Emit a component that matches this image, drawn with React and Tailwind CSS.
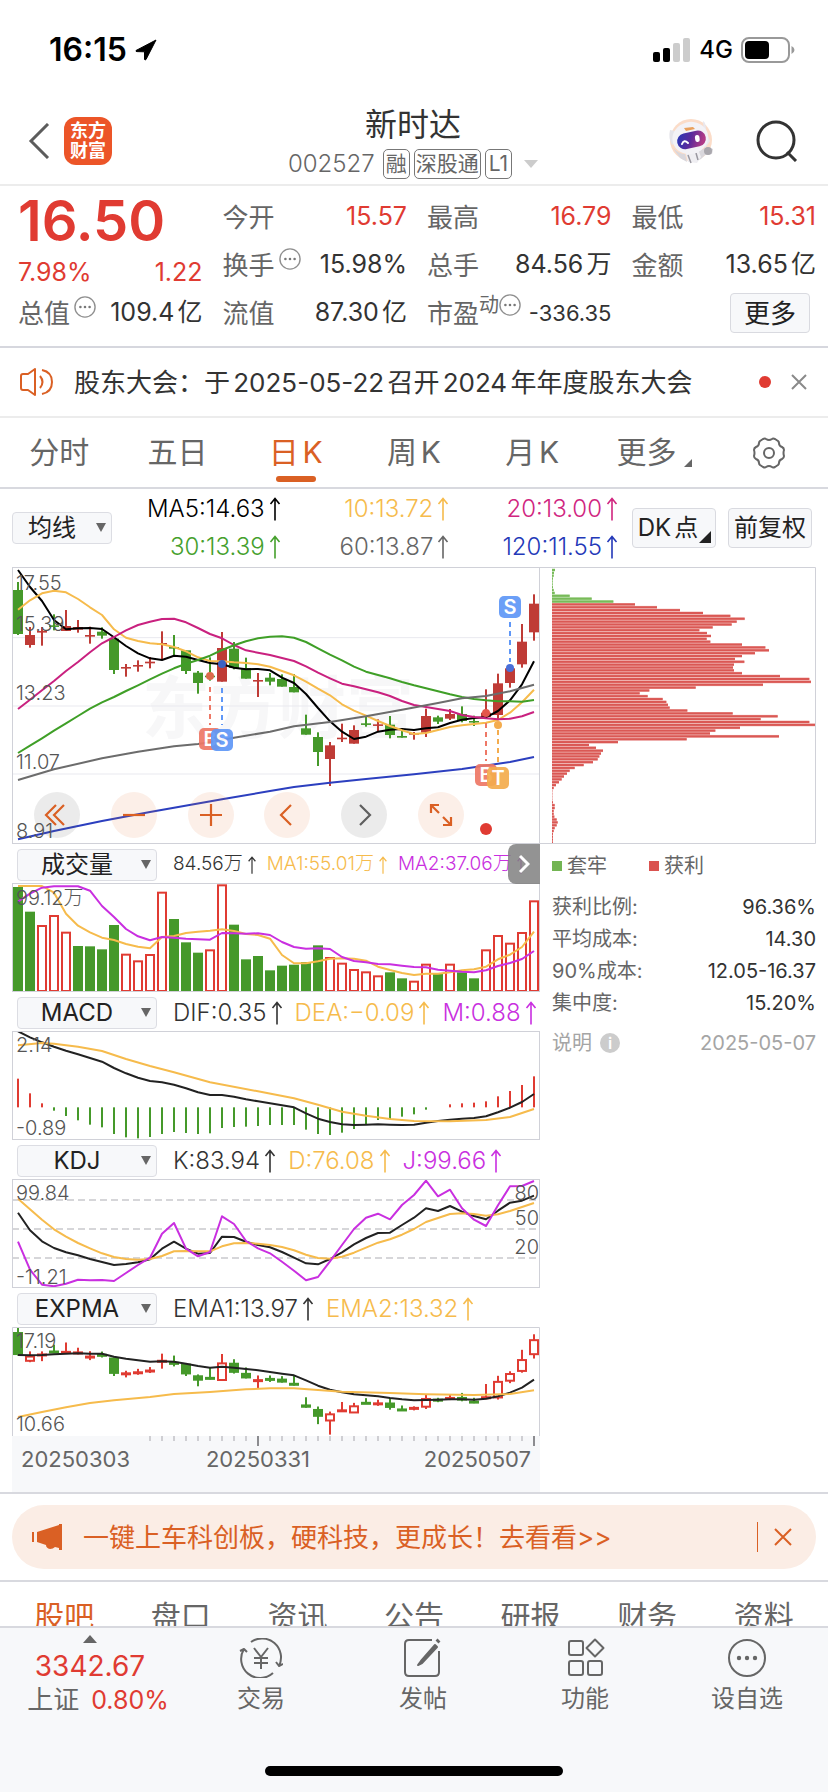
import React from "react";

const STEP = 12;
const px = (i) => 6 + STEP * i;

// [up?, high, body top, body bottom, low] on a 3x vertical scale
const CANDLES = [
  [0, 63, 87, 219, 222], [1, 198, 222, 252, 260], [1, 198, 210, 214, 254], [0, 160, 193, 197, 208],
  [1, 147, 195, 210, 210], [1, 177, 198, 206, 215], [1, 197, 222, 227, 248], [0, 199, 212, 224, 233],
  [0, 233, 233, 327, 339], [1, 309, 318, 322, 347], [1, 298, 312, 316, 332], [1, 288, 302, 307, 322],
  [1, 211, 246, 250, 297], [0, 222, 258, 263, 284], [0, 268, 268, 330, 339], [0, 330, 335, 366, 398],
  [0, 289, 344, 348, 359], [1, 213, 261, 362, 362], [0, 243, 263, 321, 325], [0, 290, 321, 353, 353],
  [1, 336, 357, 361, 408], [0, 336, 350, 362, 373], [0, 340, 354, 377, 377], [0, 339, 378, 394, 394],
  [0, 461, 502, 521, 521], [0, 514, 528, 573, 615], [1, 543, 553, 594, 675], [1, 488, 530, 534, 543],
  [1, 493, 507, 548, 548], [0, 466, 487, 491, 497], [1, 475, 490, 494, 510], [0, 465, 491, 522, 532],
  [0, 508, 525, 530, 530], [1, 513, 516, 520, 536], [1, 443, 465, 515, 528], [0, 464, 469, 482, 489],
  [1, 444, 459, 473, 477], [0, 436, 459, 480, 484], [0, 464, 480, 484, 495], [1, 385, 455, 468, 468],
  [1, 338, 367, 462, 474], [1, 312, 322, 366, 380], [1, 189, 242, 310, 320], [1, 100, 128, 214, 239],
];

const MA5 = [27, 78, 120, 177, 205, 202, 201, 204, 229, 255, 277, 292, 297, 284, 287, 297, 306, 310, 320, 325, 324, 328, 350, 366, 399, 441, 481, 512, 534, 527, 512, 506, 504, 507, 502, 499, 486, 476, 471, 469, 450, 418, 370, 301];
const MA10 = [146, 118, 97, 89, 94, 114, 139, 162, 205, 230, 240, 247, 250, 258, 271, 289, 300, 301, 304, 306, 310, 317, 330, 343, 362, 383, 403, 430, 449, 464, 480, 495, 508, 519, 516, 507, 498, 493, 489, 485, 477, 455, 424, 386];
const MA20 = [444, 416, 388, 360, 330, 303, 274, 247, 228, 208, 192, 182, 174, 173, 184, 201, 219, 232, 252, 268, 275, 282, 291, 300, 316, 335, 352, 368, 376, 385, 394, 405, 420, 432, 438, 444, 450, 462, 468, 472, 475, 473, 466, 453];
const MA30 = [576, 554, 532, 509, 487, 465, 443, 424, 408, 390, 373, 355, 338, 322, 308, 297, 284, 267, 253, 241, 232, 227, 226, 230, 243, 262, 281, 298, 317, 332, 342, 352, 363, 373, 382, 391, 400, 408, 414, 418, 421, 421, 422, 417];
const MA60 = [[0, 657], [3, 625], [7, 592], [10, 572], [13, 556], [15, 549], [16, 544], [18, 530], [21, 512], [23, 496], [26, 483], [29, 466], [32, 446], [35, 426], [37, 412], [39, 405], [41, 391], [43, 371]];
const MA120 = [[0, 835], [3, 810], [7, 780], [11, 753], [17, 715], [21, 690], [23, 678], [26, 665], [29, 654], [33, 640], [37, 624], [41, 603], [43, 588]];

const VOLUME = [138, 212, 252, 222, 272, 315, 316, 325, 252, 338, 358, 339, 152, 234, 304, 335, 325, 130, 251, 355, 345, 388, 374, 371, 363, 313, 348, 365, 384, 391, 403, 394, 412, 419, 368, 398, 368, 394, 412, 325, 282, 305, 273, 178];
const VOLUME_UP = new Set([2, 3, 4, 9, 10, 11, 12, 16, 17, 26, 27, 28, 29, 30, 33, 34, 36, 39, 40, 41, 42, 43]);
const VMA1 = [135, 135, 135, 155, 218, 254, 274, 290, 297, 309, 317, 322, 288, 285, 276, 272, 269, 265, 270, 279, 282, 293, 342, 367, 367, 361, 353, 352, 353, 359, 377, 387, 396, 402, 398, 398, 394, 388, 385, 377, 355, 341, 318, 272];
const VMA2 = [182, 158, 140, 136, 136, 136, 149, 195, 228, 264, 286, 298, 288, 290, 293, 295, 296, 276, 277, 278, 277, 282, 303, 318, 323, 322, 324, 348, 360, 364, 369, 370, 374, 378, 379, 386, 389, 392, 394, 388, 375, 366, 354, 330];

const MACD = [266, 310, 340, 362, 378, 391, 404, 412, 432, 442, 445, 441, 432, 426, 429, 432, 430, 414, 411, 410, 408, 405, 405, 405, 419, 432, 435, 428, 417, 404, 390, 388, 380, 373, 359, 352, 343, 340, 338, 334, 319, 303, 285, 259];
const DIF = [124, 142, 157, 170, 182, 193, 204, 215, 234, 250, 263, 273, 277, 284, 295, 307, 315, 315, 320, 328, 334, 340, 346, 352, 370, 386, 396, 403, 405, 404, 403, 404, 405, 404, 398, 393, 389, 386, 384, 379, 367, 353, 336, 312];
const DEA = [[0, 166], [2, 159], [3, 161], [5, 170], [7, 183], [9, 207], [11, 228], [13, 247], [16, 277], [20, 304], [23, 325], [25, 344], [27, 365], [29, 377], [31, 387], [33, 393], [36, 394], [39, 390], [41, 381], [43, 357]];

const KDJ_K = [215, 268, 301, 321, 334, 343, 354, 363, 372, 369, 364, 355, 323, 302, 323, 338, 336, 287, 288, 302, 312, 319, 333, 350, 367, 370, 354, 334, 310, 291, 276, 275, 252, 230, 202, 210, 195, 212, 225, 235, 209, 185, 179, 164];
const KDJ_D = [173, 205, 236, 265, 287, 306, 322, 337, 348, 354, 356, 354, 345, 331, 330, 331, 331, 316, 307, 306, 308, 312, 318, 328, 341, 351, 353, 347, 335, 320, 305, 295, 281, 264, 243, 231, 219, 217, 219, 224, 220, 210, 198, 186];
const KDJ_J = [302, 386, 431, 436, 428, 416, 418, 417, 420, 396, 372, 350, 278, 246, 323, 346, 333, 226, 249, 300, 322, 337, 362, 389, 418, 408, 361, 312, 264, 230, 218, 235, 192, 162, 119, 166, 146, 202, 236, 255, 193, 136, 135, 120];

const EMA1 = [195, 196, 195, 193, 191, 190, 191, 191, 200, 206, 211, 215, 214, 215, 221, 228, 233, 230, 233, 237, 241, 246, 251, 256, 271, 287, 299, 307, 313, 316, 319, 324, 328, 331, 330, 329, 328, 328, 329, 326, 319, 308, 293, 269];
const EMA2 = [[0, 381], [2, 366], [4, 352], [6, 339], [8, 331], [11, 321], [13, 312], [16, 306], [19, 298], [21, 295], [23, 295], [25, 300], [27, 305], [31, 309], [34, 313], [38, 315], [41, 312], [43, 301]];

const CHIPS = [
  9, 6, 5, 3, 2, 2, 3, 5, 8, 53, 119, 184, 249, 315, 384, 453, 535, 578, 554, 539, 482, 442, 465, 477, 464, 475, 570, 640, 651, 609, 570, 549, 577, 546, 543, 546, 570, 684, 772, 777, 633, 431, 292, 263, 287, 332, 343, 348, 353, 406, 542, 677, 626, 772, 790, 564, 490, 474, 681, 404, 198, 111, 132, 153, 147, 142, 137, 123, 95, 68, 53, 45, 36, 29, 21, 12, 5, 1, 1, 1, 1, 3, 8, 8, 5, 5, 7, 14, 17, 14, 8, 5, 3, 3, 3, 3,
];
const TRAPPED_ROWS = 12;

const GREEN = "#45992a";
const RED = "#e03b32";
const YELLOW = "#f6bb4c";
const PURPLE = "#c92fe0";

function Line({ data, offset, color, width = 2 }) {
  const points = data
    .map((d, i) => (Array.isArray(d) ? [px(d[0]), d[1]] : [px(i), d]))
    .map(([x, y]) => `${x},${(y / 3 - offset).toFixed(1)}`)
    .join(" ");
  return <polyline points={points} fill="none" stroke={color} strokeWidth={width} strokeLinejoin="round" />;
}

function Frame({ height, width = 528, open }) {
  return open ? (
    <path d={`M.5 ${height}V.5H${width - 0.5}V${height}`} fill="none" stroke="#d0d1d8" />
  ) : (
    <rect x="0.5" y="0.5" width={width - 1} height={height - 1} fill="none" stroke="#d0d1d8" />
  );
}

function Label({ x = 4, y, children, anchor = "start" }) {
  return (
    <text x={x} y={y} fontSize="20" fontWeight="300" fill="#555" textAnchor={anchor}>
      {children}
    </text>
  );
}

function Marker({ x, y, color, letter }) {
  return (
    <g opacity="0.92">
      <rect x={x - 11} y={y} width="22" height="22" rx="5" fill={color} />
      <text x={x} y={y + 18} fontSize="20" fontWeight="600" fill="#fff" textAnchor="middle">
        {letter}
      </text>
    </g>
  );
}

function Guide({ x, from, to, color }) {
  return <line x1={x} x2={x} y1={from} y2={to} stroke={color} strokeWidth="2" strokeDasharray="5 4" />;
}

function PriceChart() {
  const y = (v) => v / 3 - 6;
  return (
    <svg viewBox="0 0 528 277" className="block w-full" role="img" aria-label="日K线">
      <text x="130" y="166" fontSize="68" fontWeight="700" fill="#f7f7f8">东方财富</text>
      {[230, 435, 639].map((g) => (
        <line key={g} x1="0" x2="528" y1={y(g)} y2={y(g)} stroke="#e9e9ef" />
      ))}
      {CANDLES.map(([up, hi, top, bottom, lo], i) => {
        const color = up ? "#bf3b36" : GREEN;
        return (
          <g key={i} fill={color}>
            <rect x={px(i) - 1} y={y(hi)} width="2" height={(lo - hi) / 3} />
            <rect x={px(i) - 5} y={y(top)} width="10" height={Math.max(1.6, (bottom - top) / 3)} />
          </g>
        );
      })}
      <Line data={MA5} offset={6} color="#000" />
      <Line data={MA10} offset={6} color={YELLOW} />
      <Line data={MA20} offset={6} color="#c9217f" />
      <Line data={MA30} offset={6} color="#3f9f27" />
      <Line data={MA60} offset={6} color="#6c6c6c" />
      <Line data={MA120} offset={6} color="#2c3fbf" />
      <Label y="23">17.55</Label>
      <Label y="64">15.39</Label>
      <Label y="133">13.23</Label>
      <Label y="202">11.07</Label>
      <Label y="271">8.91</Label>
      <Guide x={px(16)} from={120} to={158} color="#ee7866" />
      <Guide x={px(17)} from={121} to={158} color="#5f97f7" />
      <Guide x={px(39)} from={156} to={194} color="#ee7866" />
      <Guide x={px(40)} from={163} to={196} color="#f4ac4e" />
      <Guide x={px(41)} from={55} to={95} color="#5f97f7" />
      <circle cx={px(16)} cy="109" r="4" fill="#dd6b4c" />
      <circle cx={px(17)} cy="97" r="4" fill="#3a62c4" />
      <circle cx={px(39)} cy="146" r="4" fill="#e4564a" />
      <circle cx={px(40)} cy="158" r="4" fill="#f4ac4e" />
      <circle cx={px(41)} cy="101" r="4" fill="#4a6fd8" />
      <Marker x={px(16)} y={161} color="#ee7866" letter="B" />
      <Marker x={px(17)} y={162} color="#5f97f7" letter="S" />
      <Marker x={px(39)} y={197} color="#ee7866" letter="B" />
      <Marker x={px(40)} y={200} color="#f4ac4e" letter="T" />
      <Marker x={px(41)} y={29} color="#5f97f7" letter="S" />
      <circle cx={px(39)} cy="262" r="6" fill="#e03b32" />
      <Frame height={277} />
    </svg>
  );
}

function VolumeChart() {
  return (
    <svg viewBox="0 0 528 109" className="block w-full" role="img" aria-label="成交量">
      {VOLUME.map((v, i) => {
        const top = v / 3 - 42;
        return VOLUME_UP.has(i) ? (
          <rect key={i} x={px(i) - 4} y={top + 1} width="8" height={107 - top} fill="#fff" stroke={RED} strokeWidth="2" />
        ) : (
          <rect key={i} x={px(i) - 5} y={top} width="10" height={109 - top} fill={GREEN} />
        );
      })}
      <Line data={VMA1} offset={42} color={YELLOW} />
      <Line data={VMA2} offset={42} color={PURPLE} />
      <Label y="22">99.12万</Label>
      <Frame height={109} />
    </svg>
  );
}

function MacdChart() {
  return (
    <svg viewBox="0 0 528 109" className="block w-full" role="img" aria-label="MACD">
      {MACD.map((v, i) => (
        <rect key={i} x={px(i) - 1} y={Math.min(v, 352) / 3 - 41} width="2" height={Math.abs(v - 352) / 3} fill={v < 352 ? RED : GREEN} />
      ))}
      <Line data={DIF} offset={41} color="#222" />
      <Line data={DEA} offset={41} color={YELLOW} />
      <Label y="21">2.14</Label>
      <Label y="104">-0.89</Label>
      <Frame height={109} />
    </svg>
  );
}

function KdjChart() {
  return (
    <svg viewBox="0 0 528 109" className="block w-full" role="img" aria-label="KDJ">
      {[21, 50, 79].map((y) => (
        <line key={y} x1="0" x2="528" y1={y} y2={y} stroke="#d6d6d9" strokeWidth="2" strokeDasharray="7 4" />
      ))}
      <Line data={KDJ_K} offset={38} color="#222" />
      <Line data={KDJ_D} offset={38} color={YELLOW} />
      <Line data={KDJ_J} offset={38} color={PURPLE} />
      <Label y="21">99.84</Label>
      <Label y="105">-11.21</Label>
      <Label x={527} y="21" anchor="end">80</Label>
      <Label x={527} y="46" anchor="end">50</Label>
      <Label x={527} y="75" anchor="end">20</Label>
      <Frame height={109} />
    </svg>
  );
}

function ExpmaChart() {
  const y = (v) => (0.5235 * v + 80.5) / 3 - 37;
  return (
    <svg viewBox="0 0 528 109" className="block w-full" role="img" aria-label="EXPMA">
      {CANDLES.map(([up, hi, top, bottom, lo], i) => {
        const color = up ? RED : GREEN;
        const height = y(bottom) - y(top);
        return (
          <g key={i} fill={color}>
            <rect x={px(i) - 1} y={y(hi)} width="2" height={y(lo) - y(hi)} />
            {up && height > 4.5 ? (
              <rect x={px(i) - 4} y={y(top) + 1} width="8" height={height - 1} fill="#fff" stroke={color} strokeWidth="2" />
            ) : (
              <rect x={px(i) - 5} y={y(top)} width="10" height={Math.max(3, height)} />
            )}
          </g>
        );
      })}
      <Line data={EMA1} offset={37} color="#222" />
      <Line data={EMA2} offset={37} color={YELLOW} />
      <Label y="21">17.19</Label>
      <Label y="104">10.66</Label>
      <Frame height={109} open />
    </svg>
  );
}

function TimeAxis() {
  return (
    <svg viewBox="0 0 528 56" className="block w-full bg-[#f7f8fa]" role="img" aria-label="日期">
      {CANDLES.map((_, i) => {
        if (i < 11) return null;
        const major = i === 20 || i === 43;
        return <rect key={i} x={px(i) - 1} y="0" width="2" height={major ? 10 : 5} fill={major ? "#8c8c90" : "#cfcfd3"} />;
      })}
      <g fontSize="22" fill="#666">
        <text x="9" y="31">20250303</text>
        <text x={px(20)} y="31" textAnchor="middle">20250331</text>
        <text x="519" y="31" textAnchor="end">20250507</text>
      </g>
    </svg>
  );
}

function ChipChart() {
  return (
    <svg viewBox="0 0 276 277" className="block w-full" role="img" aria-label="筹码分布">
      {CHIPS.map((w, i) => {
        const trapped = i < TRAPPED_ROWS;
        const y = 2 + i * 2.868;
        return (
          <g key={i}>
            <rect x="12" y={y - 0.4} width={w / 3} height="2.8" fill={trapped ? "#b4dba2" : "#eda6a3"} />
            <rect x="12" y={y} width={w / 3} height="2" fill={trapped ? "#78ba59" : "#da5854"} />
          </g>
        );
      })}
      <path d="M0 .5H275.500V276.500H0" fill="none" stroke="#d0d1d8" />
    </svg>
  );
}

function UpArrow({ small }) {
  return (
    <svg viewBox="0 0 12 24" className={small ? "h-[18px] w-[10px] shrink-0" : "h-6 w-3 shrink-0"} fill="none" stroke="currentColor" strokeWidth="1.600" aria-hidden="true">
      <path d="M6 23.500V1.500M1.500 7L6 1.500L10.500 7" />
    </svg>
  );
}

function Reading({ color, small, children }) {
  return (
    <span className={`flex items-center gap-1 whitespace-nowrap font-light ${small ? "text-[19px]" : "text-[24px] leading-[32px]"} ${color}`}>
      {children}
      <UpArrow small={small} />
    </span>
  );
}

function Picker({ label, options, wide }) {
  return (
    <span className={`relative block shrink-0 ${wide ? "w-[140px]" : "w-[100px]"}`}>
      <select
        aria-label={label}
        className="block h-8 w-full appearance-none rounded-[4px] border border-[#dcdde3] bg-[#f7f8fa] pr-5 text-center text-[24px] leading-[28px] text-[#222] [text-align-last:center]"
      >
        {options.map((o) => (
          <option key={o}>{o}</option>
        ))}
      </select>
      <svg viewBox="0 0 10 9" className="pointer-events-none absolute right-[6px] top-[11px] h-[9px] w-[10px]" aria-hidden="true">
        <path d="M0 0H10L5 9Z" fill="#666" />
      </svg>
    </span>
  );
}

function IndicatorHeader({ name, children }) {
  return (
    <div className="flex h-[39px] items-center gap-4 pl-[5px] pt-[2px]">
      <Picker label={name} options={[name]} wide />
      {children}
    </div>
  );
}

function MoreDots() {
  return (
    <svg viewBox="0 0 24 24" className="h-[22px] w-[22px] shrink-0" aria-hidden="true">
      <circle cx="12" cy="12" r="11" fill="none" stroke="#8f8f8f" strokeWidth="1.500" />
      <circle cx="7" cy="12" r="1.400" fill="#777" />
      <circle cx="12" cy="12" r="1.400" fill="#777" />
      <circle cx="17" cy="12" r="1.400" fill="#777" />
    </svg>
  );
}

function Stat({ label, info, red, children }) {
  return (
    <div className="flex h-12 items-center justify-between whitespace-nowrap">
      <dt className="flex items-center text-[26px] text-[#666]">
        {label}
        {info && (
          <span className="-mt-3 ml-1">
            <MoreDots />
          </span>
        )}
      </dt>
      <dd className={`text-[25px] [text-autospace:normal] ${red ? "text-[#e03b32]" : "text-[#333]"}`}>{children}</dd>
    </div>
  );
}

function Robot() {
  return (
    <svg viewBox="0 0 46 46" className="h-[46px] w-[46px]" aria-hidden="true">
      <defs>
        <linearGradient id="visor" x1="0" y1="0" x2="1" y2="0.300">
          <stop offset="0" stopColor="#2438b8" />
          <stop offset="0.550" stopColor="#5a2a9c" />
          <stop offset="1" stopColor="#b03a86" />
        </linearGradient>
      </defs>
      <circle cx="23" cy="22" r="21" fill="#fbdcc8" />
      <path d="M5 30q6 6 12 6l2 8-7-4zM33 32l7-3 5 2-1 5-7 1-4 4-6 3-5-1-4-9z" fill="#d9d7dc" />
      <circle cx="40" cy="33" r="4" fill="#a9a7ad" />
      <path d="M17 33l13-2 3 8-4 6-9-1z" fill="#efeef2" />
      <path d="M20 37l3 8M28 35l2 7" stroke="#9a98a0" strokeWidth="1.500" fill="none" />
      <path d="M2 12q-2 8 2 15l3-2V13z" fill="#e5e4ea" />
      <path d="M35 3q3 1 3 10l4 10-5 7z" fill="#e9e8ee" />
      <ellipse cx="22" cy="20" rx="18" ry="16" fill="#f3f2f6" transform="rotate(-14 22 19)" />
      <path d="M16 10l9-1 2 2-9 2z" fill="#e9a05c" />
      <rect x="9" y="14" width="29" height="16" rx="8" fill="url(#visor)" transform="rotate(-12 23 22)" />
      <path d="M14 26q2-5 6-1" fill="none" stroke="#fff" strokeWidth="2" strokeLinecap="round" />
      <rect x="27" y="17" width="4.500" height="7" rx="2.200" fill="#fff" transform="rotate(-8 29 20)" />
    </svg>
  );
}

function StatusBar() {
  return (
    <div className="flex h-[98px] items-center justify-between pl-[49px] pr-[33px] pt-[2px] text-black">
      <div className="flex items-center gap-2">
        <span className="text-[32px] font-semibold">16:15</span>
        <svg viewBox="0 0 22 22" className="h-[22px] w-[22px]" aria-hidden="true">
          <path d="M21 1L1 11.500Q.5 12.500 2 12.600L9.500 12.800V20Q9.800 21.800 11 20.500Z" stroke="#000" strokeLinejoin="round" />
        </svg>
      </div>
      <div className="flex items-center gap-2">
        <svg viewBox="0 0 38 24" className="h-6 w-[38px]" aria-hidden="true">
          <rect x="0" y="14" width="7" height="10" rx="2" />
          <rect x="10" y="10" width="7" height="14" rx="2" />
          <rect x="20" y="5" width="7" height="19" rx="2" fill="#ccc" />
          <rect x="30" y="0" width="7" height="24" rx="2" fill="#ccc" />
        </svg>
        <span className="text-[24px] font-medium">4G</span>
        <svg viewBox="0 0 54 26" className="h-[26px] w-[54px]" aria-hidden="true">
          <rect x="1" y="1" width="47" height="24" rx="7" fill="none" stroke="#999" strokeWidth="2" />
          <rect x="4" y="4" width="24" height="18" rx="4" />
          <path d="M50.500 9q3 1.500 3 4t-3 4z" fill="#999" />
        </svg>
      </div>
    </div>
  );
}

function Header() {
  return (
    <header className="grid h-[88px] grid-cols-[1fr_auto_1fr] items-center border-b-2 border-[#ececec] pl-7 pr-[30px]">
      <div className="flex items-center gap-[14px]">
        <button aria-label="返回">
          <svg viewBox="0 0 22 36" className="h-9 w-[22px]" fill="none" stroke="#5c5c5c" strokeWidth="3" aria-hidden="true">
            <path d="M20 1L3 18L20 35" />
          </svg>
        </button>
        <a href="#home" className="grid h-12 w-12 place-content-center rounded-xl bg-[#ec5528] text-center text-[18px] font-bold leading-[20px] text-white">
          东方
          <br />
          财富
        </a>
      </div>
      <div className="flex flex-col items-center pt-1">
        <h1 className="text-[32px] leading-[42px] text-[#333]">新时达</h1>
        <button className="flex h-9 items-center gap-1 text-[21px] text-[#666]">
          <span className="mr-1 text-[24px] font-light">002527</span>
          <span className="flex h-[30px] items-center rounded-[5px] border border-[#777] px-[2px]">融</span>
          <span className="flex h-[30px] items-center rounded-[5px] border border-[#777] px-px">深股通</span>
          <span className="flex h-[30px] items-center rounded-[5px] border border-[#777] px-[3px]">L1</span>
          <svg viewBox="0 0 14 8" className="ml-2 h-2 w-[14px]" aria-hidden="true">
            <path d="M0 0H14L7 8Z" fill="#ccc" />
          </svg>
        </button>
      </div>
      <div className="flex items-center justify-end gap-[42px]">
        <button aria-label="助手">
          <Robot />
        </button>
        <button aria-label="搜索">
          <svg viewBox="0 0 42 42" className="h-[42px] w-[42px]" fill="none" stroke="#333" strokeWidth="3" aria-hidden="true">
            <circle cx="20" cy="20" r="18" />
            <path d="M31 32L40 41" />
          </svg>
        </button>
      </div>
    </header>
  );
}

function Quote() {
  return (
    <dl className="grid h-[162px] grid-cols-4 gap-x-5 border-b-2 border-[#d6d7de] pl-[18px] pr-3 pt-[7px]">
      <div className="flex flex-col">
        <div className="h-[56px] text-[56px] font-semibold leading-[56px] text-[#e03b32]">16.50</div>
        <div className="flex h-10 items-center justify-between pt-2 text-[25px] text-[#e03b32]">
          <span>7.98%</span>
          <span>1.22</span>
        </div>
        <Stat label="总值" info>109.4亿</Stat>
      </div>
      <div>
        <Stat label="今开" red>15.57</Stat>
        <Stat label="换手" info>15.98%</Stat>
        <Stat label="流值">87.30亿</Stat>
      </div>
      <div>
        <Stat label="最高" red>16.79</Stat>
        <Stat label="总手">84.56万</Stat>
        <div className="flex h-12 items-center justify-between whitespace-nowrap">
          <dt className="flex items-center text-[26px] text-[#666]">
            市盈
            <span className="-mt-4 flex items-center text-[20px]">
              动
              <MoreDots />
            </span>
          </dt>
          <dd className="text-[22px] text-[#333]">-336.35</dd>
        </div>
      </div>
      <div>
        <Stat label="最低" red>15.31</Stat>
        <Stat label="金额">13.65亿</Stat>
        <div className="flex h-12 items-center justify-end pr-[6px]">
          <button className="flex h-10 w-20 items-center justify-center rounded-[4px] border border-[#d9dae0] bg-[#f7f8fa] text-[26px] text-[#222]">更多</button>
        </div>
      </div>
    </dl>
  );
}

function Notice() {
  return (
    <div className="flex h-[70px] items-center border-b-2 border-[#ececec] pl-5 pr-[21px]">
      <svg viewBox="0 0 34 28" className="h-7 w-[34px] shrink-0" fill="none" stroke="#da6024" strokeWidth="2" strokeLinejoin="round" aria-hidden="true">
        <path d="M15 1V27L8 22H3Q1 22 1 20V8Q1 6 3 6H8Z" />
        <path d="M20 8Q25 14 20 20" />
        <path d="M22 2Q32 4 32 14T22 26" />
      </svg>
      <a href="#notice" className="ml-5 flex-1 whitespace-nowrap text-[26px] text-[#333] [text-autospace:normal]">
        股东大会：于2025-05-22召开2024年年度股东大会
      </a>
      <span className="mr-5 h-3 w-3 rounded-full bg-[#e03b32]" />
      <button aria-label="关闭">
        <svg viewBox="0 0 16 16" className="h-4 w-4" stroke="#8a8a8a" strokeWidth="2" aria-hidden="true">
          <path d="M1 1L15 15M15 1L1 15" />
        </svg>
      </button>
    </div>
  );
}

function PeriodTabs() {
  return (
    <nav className="grid h-[71px] grid-cols-7 border-b-2 border-[#d8d9df] text-[30px] text-[#666] [text-autospace:normal]">
      {["分时", "五日", "日K", "周K", "月K"].map((t) => (
        <button key={t} className={`relative flex items-center justify-center ${t === "日K" ? "text-[#da6024]" : ""}`}>
          {t}
          {t === "日K" && <span className="absolute bottom-[5px] h-[6px] w-10 rounded-full bg-[#da6024]" />}
        </button>
      ))}
      <button className="relative flex items-center justify-center pr-2">
        更多
        <svg viewBox="0 0 9 9" className="absolute bottom-5 right-[18px] h-2 w-2" aria-hidden="true">
          <path d="M9 0V9H0Z" fill="#666" />
        </svg>
      </button>
      <button aria-label="设置" className="flex items-center justify-center">
        <svg viewBox="0 0 34 32" className="h-8 w-[34px]" fill="none" stroke="#666" strokeWidth="2" strokeLinejoin="round" aria-hidden="true">
          <path d="M11 2Q13 1 14 2Q17 4 20 2Q21 1 23 2L26 4Q27 5 27 6Q27 9 30 10Q32 11 32 13Q31 16 32 19Q32 21 30 22Q27 23 27 26Q27 27 26 28L23 30Q21 31 20 30Q17 28 14 30Q13 31 11 30L8 28Q7 27 7 26Q7 23 4 22Q2 21 2 19Q3 16 2 13Q2 11 4 10Q7 9 7 6Q7 5 8 4Z" />
          <circle cx="17" cy="16" r="5" />
        </svg>
      </button>
    </nav>
  );
}

function AverageBar() {
  return (
    <div className="flex h-[78px] items-center px-3">
      <Picker label="指标" options={["均线"]} />
      <div className="grid flex-1 grid-cols-3 justify-items-end gap-y-[6px] pr-[14px]">
        <Reading color="text-black">MA5:14.63</Reading>
        <Reading color="text-[#f6bb4c]">10:13.72</Reading>
        <Reading color="text-[#d0267f]">20:13.00</Reading>
        <Reading color="text-[#45a02c]">30:13.39</Reading>
        <Reading color="text-[#666]">60:13.87</Reading>
        <Reading color="text-[#2338b8]">120:11.55</Reading>
      </div>
      <div className="flex gap-3 pr-1 text-[24px] text-[#222]">
        <button className="relative h-10 w-[84px] rounded-[4px] border border-[#d9dae0] bg-[#f7f8fa] pr-3 [text-autospace:normal]">
          DK点
          <svg viewBox="0 0 12 12" className="absolute bottom-1 right-1 h-3 w-3" aria-hidden="true">
            <path d="M12 0V12H0Z" fill="#222" />
          </svg>
        </button>
        <button className="h-10 w-[84px] rounded-[4px] border border-[#d9dae0] bg-[#f7f8fa]">前复权</button>
      </div>
    </div>
  );
}

const TOOLS = [
  ["收起", true, "#da6024", "M22 13L12 23L22 33M30 13L20 23L30 33"],
  ["缩小", false, "#da6024", "M12 23H34"],
  ["放大", false, "#da6024", "M12 23H34M23 12V34"],
  ["左移", false, "#da6024", "M27 13L17 23L27 33"],
  ["右移", true, "#5f5f5f", "M19 13L29 23L19 33"],
  ["全屏", false, "#da6024", "M13 21V13H21M13 13L21 21M33 25V33H25M33 33L25 25"],
];

function ChartTools() {
  return (
    <div className="absolute bottom-[6px] left-[22px] right-[76px] flex justify-between">
      {TOOLS.map(([name, grey, stroke, d]) => (
        <button key={name} aria-label={name} className={`h-[46px] w-[46px] rounded-full ${grey ? "bg-[#666]/13" : "bg-[#ea7c40]/12"}`}>
          <svg viewBox="0 0 46 46" className="h-[46px] w-[46px]" fill="none" stroke={stroke} strokeWidth="2.200" aria-hidden="true">
            <path d={d} />
          </svg>
        </button>
      ))}
    </div>
  );
}

function ChipPanel() {
  const rows = [
    ["获利比例:", "96.36%"],
    ["平均成本:", "14.30"],
    ["90%成本:", "12.05-16.37"],
    ["集中度:", "15.20%"],
  ];
  return (
    <aside>
      <ChipChart />
      <div className="pl-3 text-[20px] text-[#666]">
        <div className="flex h-11 items-center">
          <span className="flex w-[97px] items-center gap-[5px]">
            <i className="h-[10px] w-[10px] bg-[#73b553]" />
            套牢
          </span>
          <span className="flex items-center gap-[5px]">
            <i className="h-[10px] w-[10px] bg-[#da5350]" />
            获利
          </span>
        </div>
        <dl className="pt-[3px]">
          {rows.map(([k, v]) => (
            <div key={k} className="flex h-8 items-center justify-between [text-autospace:normal]">
              <dt>{k}</dt>
              <dd className="text-[#333]">{v}</dd>
            </div>
          ))}
        </dl>
        <div className="flex h-12 items-center justify-between text-[#a5a5a5]">
          <button className="flex items-center gap-2">
            说明
            <span className="flex h-5 w-5 items-center justify-center rounded-full bg-[#ccc] text-[16px] font-semibold leading-none text-white">i</span>
          </button>
          <span>2025-05-07</span>
        </div>
      </div>
    </aside>
  );
}

function Charts() {
  return (
    <section className="grid grid-cols-[528fr_276fr] px-3">
      <div>
        <div className="relative">
          <PriceChart />
          <ChartTools />
        </div>
        <div className="relative">
          <IndicatorHeader name="成交量">
            <div className="flex gap-[10px]">
              <Reading small color="text-[#333]">84.56万</Reading>
              <Reading small color="text-[#f6bb4c]">MA1:55.01万</Reading>
              <Reading small color="text-[#c92fe0]">MA2:37.06万</Reading>
            </div>
          </IndicatorHeader>
          <button aria-label="展开" className="absolute right-0 top-0 flex h-10 w-8 items-center justify-center rounded-l-lg bg-[#808080]/85">
            <svg viewBox="0 0 12 20" className="h-5 w-3" fill="none" stroke="#fff" strokeWidth="3" aria-hidden="true">
              <path d="M2 2L10 10L2 18" />
            </svg>
          </button>
        </div>
        <VolumeChart />
        <IndicatorHeader name="MACD">
          <div className="flex gap-3">
            <Reading color="text-[#333]">DIF:0.35</Reading>
            <Reading color="text-[#f6bb4c]">DEA:−0.09</Reading>
            <Reading color="text-[#c92fe0]">M:0.88</Reading>
          </div>
        </IndicatorHeader>
        <MacdChart />
        <IndicatorHeader name="KDJ">
          <div className="flex gap-3">
            <Reading color="text-[#333]">K:83.94</Reading>
            <Reading color="text-[#f6bb4c]">D:76.08</Reading>
            <Reading color="text-[#c92fe0]">J:99.66</Reading>
          </div>
        </IndicatorHeader>
        <KdjChart />
        <IndicatorHeader name="EXPMA">
          <div className="flex gap-3">
            <Reading color="text-[#333]">EMA1:13.97</Reading>
            <Reading color="text-[#f6bb4c]">EMA2:13.32</Reading>
          </div>
        </IndicatorHeader>
        <ExpmaChart />
        <TimeAxis />
      </div>
      <ChipPanel />
    </section>
  );
}

function Banner() {
  return (
    <div className="border-y-2 border-[#d8d9df] px-3 py-[11px]">
      <div className="flex h-16 items-center rounded-full bg-[#fbede5] pl-5 pr-6 text-[#da6024]">
        <svg viewBox="0 0 30 26" className="h-[26px] w-[30px] shrink-0" fill="currentColor" aria-hidden="true">
          <path d="M0 8H2V18H0ZM5 8L27 1V0H30V26H27V24L23 23Q21 25 18 25Q14 24 14 21L5 18Z" />
        </svg>
        <a href="#promo" className="ml-[21px] flex-1 whitespace-nowrap text-[26px]">
          一键上车科创板，硬科技，更成长！去看看&gt;&gt;
        </a>
        <span className="mr-4 h-[30px] w-px bg-[#da6024]" />
        <button aria-label="关闭广告">
          <svg viewBox="0 0 18 18" className="h-[18px] w-[18px]" stroke="currentColor" strokeWidth="2" aria-hidden="true">
            <path d="M1 1L17 17M17 1L1 17" />
          </svg>
        </button>
      </div>
    </div>
  );
}

function SectionTabs() {
  return (
    <nav className="grid grid-cols-7 px-[6px] pt-3 text-[30px] leading-[44px] text-[#666]">
      {["股吧", "盘口", "资讯", "公告", "研报", "财务", "资料"].map((t, i) => (
        <button key={t} className={i === 0 ? "text-[#da6024]" : ""}>
          {t}
        </button>
      ))}
    </nav>
  );
}

function NavItem({ label, children }) {
  return (
    <button className="flex flex-col items-center pt-[10px]">
      <svg viewBox="0 0 44 40" className="h-10 w-11" fill="none" stroke="#666" strokeWidth="2" strokeLinejoin="round" aria-hidden="true">
        {children}
      </svg>
      <span className="mt-[3px] text-[24px] leading-[36px]">{label}</span>
    </button>
  );
}

function BottomBar() {
  return (
    <footer className="shrink-0 border-t-2 border-[#d8d9df] bg-[#f7f8fa] text-[#666]">
      <div className="grid h-[138px] grid-cols-[180fr_162fr_162fr_162fr_162fr] items-start">
        <button className="flex flex-col items-center pt-[7px]">
          <svg viewBox="0 0 14 8" className="h-2 w-[14px]" aria-hidden="true">
            <path d="M0 8H14L7 0Z" fill="#666" />
          </svg>
          <span className="mt-[7px] text-[28px] leading-[32px] text-[#e03b32]">3342.67</span>
          <span className="mt-[2px] flex items-center gap-3 pl-4 text-[26px] leading-[32px]">
            上证<span className="text-[25px] text-[#e03b32]">0.80%</span>
          </span>
        </button>
        <NavItem label="交易">
          <path d="M12 4A19 19 0 0 1 40 28L44 26M34 35A19 19 0 0 1 5 11L1 13M40 28L37 24M5 11L8 14" />
          <path d="M15 10L22 19L29 10M22 19V31M15 20H29M15 25H29" />
        </NavItem>
        <NavItem label="发帖">
          <path d="M31 2H8Q4 2 4 6V34Q4 38 8 38H34Q38 38 38 34V13" />
          <path d="M34 7L20 23L17 27L21 25L36 9Z" fill="#666" />
          <path d="M36 4L38 2" strokeWidth="4" />
        </NavItem>
        <NavItem label="功能">
          <rect x="6" y="3" width="14" height="14" rx="2" />
          <rect x="6" y="23" width="14" height="14" rx="2" />
          <rect x="25" y="23" width="14" height="14" rx="2" />
          <path d="M32 1.500L40.500 10L32 18.500L23.500 10Z" />
        </NavItem>
        <NavItem label="设自选">
          <circle cx="22" cy="20" r="18" />
          <g fill="#666" stroke="none">
            <circle cx="14" cy="20" r="2.200" />
            <circle cx="22" cy="20" r="2.200" />
            <circle cx="30" cy="20" r="2.200" />
          </g>
        </NavItem>
      </div>
      <div className="mx-auto mb-4 h-[10px] w-[36%] rounded-full bg-black" />
    </footer>
  );
}

export default function App() {
  return (
    <div className="flex h-screen flex-col overflow-hidden bg-white font-['Inter','Noto_Sans_CJK_SC',sans-serif]">
      <StatusBar />
      <Header />
      <main className="min-h-0 flex-1 overflow-hidden">
        <Quote />
        <Notice />
        <PeriodTabs />
        <AverageBar />
        <Charts />
        <Banner />
        <SectionTabs />
      </main>
      <BottomBar />
    </div>
  );
}
